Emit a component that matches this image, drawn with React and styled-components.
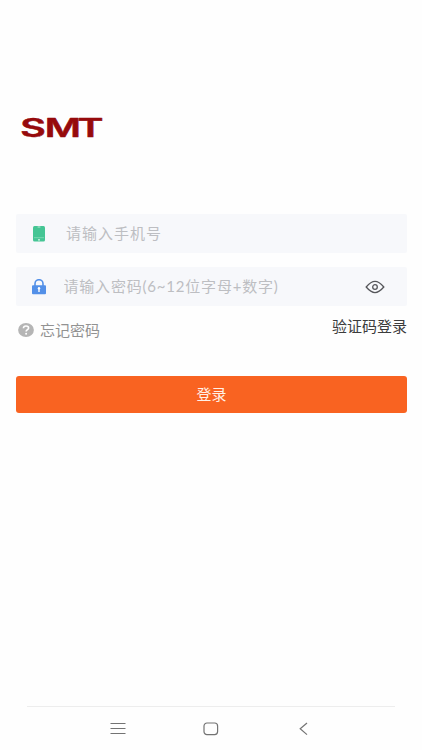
import React, { useState } from 'react';
import styled, { createGlobalStyle } from 'styled-components';

const App = () => {
  const [phone, setPhone] = useState('');
  const [password, setPassword] = useState('');
  const [visible, setVisible] = useState(false);
  return (
    <>
      <GlobalStyle />
      <Page>
        <Content>
          <Logo width="90" height="36" viewBox="0 0 90 36" role="img">
            <text transform="translate(0.2 26.6) scale(1.54 1)" dx="0 -0.7 -2.2">
              SMT
            </text>
          </Logo>
          <Field>
            <FieldIcon>
              <PhoneIcon />
            </FieldIcon>
            <Input
              type="tel"
              placeholder="请输入手机号"
              value={phone}
              $indent={20}
              $spacing={1}
              onChange={(e) => setPhone(e.target.value)}
            />
          </Field>
          <Field>
            <FieldIcon>
              <LockIcon />
            </FieldIcon>
            <Input
              type={visible ? 'text' : 'password'}
              placeholder="请输入密码(6~12位字母+数字)"
              value={password}
              $indent={17.5}
              $spacing={0.8}
              onChange={(e) => setPassword(e.target.value)}
            />
            <EyeButton onClick={() => setVisible(!visible)}>
              <EyeIcon />
            </EyeButton>
          </Field>
          <Links>
            <Forgot>
              <HelpIcon />
              <span>忘记密码</span>
            </Forgot>
            <CodeLogin>验证码登录</CodeLogin>
          </Links>
          <LoginButton>登录</LoginButton>
        </Content>
        <NavBar>
          <svg width="16" height="14" viewBox="0 0 16 14">
            <path d="M.5 1.5h15M.5 6.5h15M.5 11.5h15" />
          </svg>
          <svg width="16" height="14" viewBox="0 0 16 14">
            <rect x="1" y="1" width="13.6" height="11.6" rx="3" />
          </svg>
          <svg width="16" height="14" viewBox="0 0 16 14">
            <path d="M11 1 4.2 6.8l6.8 5.8" />
          </svg>
        </NavBar>
      </Page>
    </>
  );
};

const PhoneIcon = () => (
  <svg width="12" height="16" viewBox="0 0 12 16">
    <rect width="12" height="15.5" rx="1.5" fill="#45c594" />
    <path d="M4.6 1h2.8" stroke="#c9f0df" strokeWidth="0.9" />
    <path d="M1 11.7h10" stroke="#8fdfbf" strokeWidth="0.7" />
    <circle cx="6" cy="13.8" r="0.9" fill="#e3f8ef" />
  </svg>
);

const LockIcon = () => (
  <svg width="14" height="16" viewBox="0 0 14 16">
    <path
      d="M3 7V4.7a4 4 0 0 1 8 0V7"
      fill="none"
      stroke="#5390e8"
      strokeWidth="1.6"
    />
    <rect y="6.2" width="14" height="9" rx="1" fill="#5390e8" />
    <circle cx="7" cy="9.2" r="1.2" fill="#fff" />
    <path d="M7 9v4" stroke="#fff" strokeWidth="1.4" />
  </svg>
);

const EyeIcon = () => (
  <svg
    width="20"
    height="14"
    viewBox="0 0 20 14"
    fill="none"
    stroke="#55565a"
    strokeWidth="1.3"
  >
    <path d="M1.2 7C4.2 3.5 7.5 1.4 10 1.4S15.8 3.5 18.8 7c-3 3.5-6.3 5.6-8.8 5.6S4.2 10.5 1.2 7Z" />
    <circle cx="10" cy="7" r="2.3" />
  </svg>
);

const HelpIcon = () => (
  <svg width="16" height="14" viewBox="0 0 16 14">
    <ellipse cx="8" cy="7" rx="7.9" ry="6.9" fill="#b5b5b5" />
    <path
      d="M5.4 5.2c.1-1.4 1.1-2.2 2.6-2.2s2.6.8 2.6 2c0 1.6-2.5 1.6-2.5 3.5"
      fill="none"
      stroke="#fff"
      strokeWidth="1.6"
    />
    <circle cx="8.1" cy="10.7" r="1" fill="#fff" />
  </svg>
);

export default App;

const GlobalStyle = createGlobalStyle`
  * {
    box-sizing: border-box;
  }
  body {
    margin: 0;
    background: #fefefe;
  }
  body,
  input,
  button {
    font-family: Lato, 'Noto Sans CJK SC', sans-serif;
  }
`;

const Page = styled.div`
  display: flex;
  flex-direction: column;
  height: 750px;
`;

const Content = styled.main`
  flex: 1;
  display: flex;
  flex-direction: column;
  padding: 110px 15px 0 16px;
`;

const Logo = styled.svg`
  flex-shrink: 0;
  margin: 0 0 68px 4px;
  overflow: visible;
  text {
    font-family: Inter, sans-serif;
    font-size: 25.5px;
    font-weight: 600;
    fill: #960a0c;
    stroke: #960a0c;
    stroke-width: 0.5;
    stroke-linejoin: round;
  }
`;

const Field = styled.div`
  display: flex;
  align-items: center;
  height: 39px;
  margin-bottom: 14px;
  padding: 0 22px 0 16px;
  border-radius: 2px;
  background: #f7f8fb;
`;

const FieldIcon = styled.span`
  display: flex;
  justify-content: center;
  width: 14px;
  flex-shrink: 0;
`;

const Input = styled.input`
  flex: 1;
  min-width: 0;
  margin-left: ${({ $indent }) => $indent}px;
  padding: 0 0 2px;
  border: 0;
  outline: 0;
  background: none;
  font-size: 15px;
  letter-spacing: ${({ $spacing }) => $spacing}px;
  &::placeholder {
    color: #bdbec2;
  }
`;

const EyeButton = styled.button`
  display: flex;
  padding: 0;
  border: 0;
  background: none;
`;

const Links = styled.div`
  display: flex;
  justify-content: space-between;
  height: 34px;
  padding-left: 2px;
`;

const Forgot = styled.a`
  display: flex;
  align-items: center;
  gap: 6px;
  height: 20px;
  color: #929292;
  font-size: 15px;
  span {
    padding-bottom: 2px;
  }
`;

const CodeLogin = styled.a`
  height: 20px;
  margin-top: -4px;
  line-height: 20px;
  color: #3c3c3c;
  font-size: 15px;
`;

const LoginButton = styled.button`
  height: 37px;
  margin-top: 22px;
  padding: 0 0 2px;
  border: 0;
  border-radius: 3px;
  background: #f96321;
  color: #fff0e6;
  font-size: 15px;
`;

const NavBar = styled.nav`
  display: flex;
  justify-content: center;
  align-items: center;
  gap: 77px;
  height: 44px;
  margin: 0 27px;
  border-top: 1px solid #ededed;
  svg {
    fill: none;
    stroke: #737373;
    stroke-width: 1.2;
  }
`;
